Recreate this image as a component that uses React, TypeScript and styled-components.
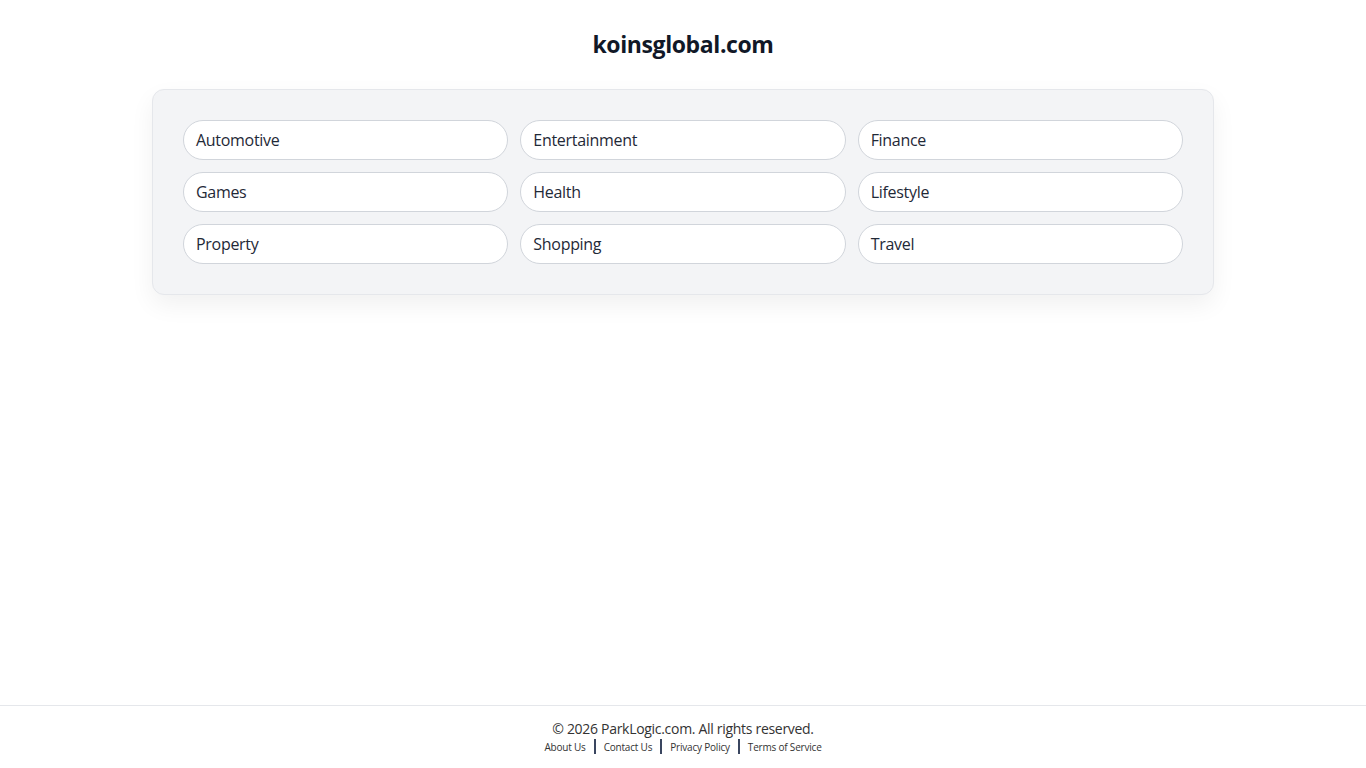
import React from "react";
import styled, { createGlobalStyle } from "styled-components";

const Global = createGlobalStyle`
  html, body { margin: 0; padding: 0; background: #ffffff; }
  body { font-family: "Open Sans", "Noto Sans", sans-serif; color: #1f2937; }
  * { box-sizing: border-box; }
`;

const Page = styled.div`
  min-height: 100vh;
  display: flex;
  flex-direction: column;
`;

const Main = styled.main`
  flex: 1;
  display: flex;
  flex-direction: column;
  align-items: center;
  padding-top: 28px;
`;

const Title = styled.h1`
  margin: 0;
  font-size: 23px;
  line-height: 32px;
  font-weight: 700;
  color: #111827;
  letter-spacing: -0.4px;
`;

const Card = styled.div`
  margin-top: 29px;
  width: 1062px;
  padding: 30px;
  background: #f3f4f6;
  border: 1px solid #e5e7eb;
  border-radius: 12px;
  box-shadow: 0 10px 25px rgba(0, 0, 0, 0.06);
  display: grid;
  grid-template-columns: repeat(3, 1fr);
  gap: 12px;
`;

const Pill = styled.a`
  display: flex;
  align-items: center;
  height: 40px;
  padding: 0 12px;
  background: #ffffff;
  border: 1px solid #d1d5db;
  border-radius: 20px;
  font-size: 16px;
  color: #1f2937;
  text-decoration: none;
  letter-spacing: -0.3px;
`;

const Footer = styled.footer`
  border-top: 1px solid #e5e7eb;
  padding: 14px 0 14px;
  display: flex;
  flex-direction: column;
  align-items: center;
`;

const Copy = styled.div`
  font-size: 14px;
  line-height: 18px;
  color: #333333;
  letter-spacing: -0.3px;
`;

const Links = styled.div`
  display: flex;
  align-items: center;
  margin-top: 1px;
`;

const FLink = styled.a<{ $first?: boolean }>`
  font-size: 10px;
  line-height: 12px;
  color: #333333;
  text-decoration: none;
  padding: 0 8px;
  border-left: ${(p) => (p.$first ? "none" : "2px solid #3a4660")};
  letter-spacing: -0.2px;
  height: 15px;
  display: flex;
  align-items: center;
`;

const cats = [
  "Automotive",
  "Entertainment",
  "Finance",
  "Games",
  "Health",
  "Lifestyle",
  "Property",
  "Shopping",
  "Travel",
];

export default function App() {
  return (
    <Page>
      <Global />
      <Main>
        <Title>koinsglobal.com</Title>
        <Card>
          {cats.map((c) => (
            <Pill key={c} href="#">
              {c}
            </Pill>
          ))}
        </Card>
      </Main>
      <Footer>
        <Copy>© 2026 ParkLogic.com. All rights reserved.</Copy>
        <Links>
          <FLink $first href="#">About Us</FLink>
          <FLink href="#">Contact Us</FLink>
          <FLink href="#">Privacy Policy</FLink>
          <FLink href="#">Terms of Service</FLink>
        </Links>
      </Footer>
    </Page>
  );
}
